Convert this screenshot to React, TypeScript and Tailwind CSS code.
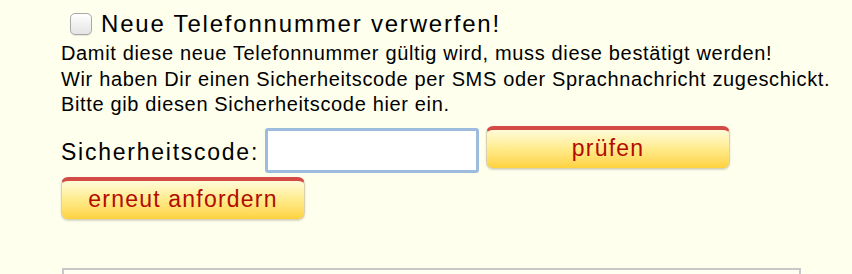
export default function App() {
  const btn =
    "h-[43px] rounded-[7px] border border-[#d9d2b0] border-t-[4px] border-t-[#d44a45] bg-gradient-to-b from-[#fffbd8] via-[#ffeb8a] to-[#ffd23c] text-[#b30a00] text-[23px] tracking-[1.2px] leading-none shadow-[0_1px_2px_rgba(0,0,0,0.15)] flex items-center justify-center";
  return (
    <div className="w-[852px] h-[274px] overflow-hidden bg-[#ffffee] font-['Liberation_Sans',Arial,sans-serif] text-black">
      <div className="pl-[61px] pt-[10px]">
        <div className="flex items-center h-[28px]">
          <span className="ml-[9px] w-[22px] h-[22px] rounded-[5px] border border-[#a9a9a9] bg-gradient-to-b from-white to-[#e4e4e4] shadow-[0_1px_1px_rgba(0,0,0,0.1)]" />
          <span className="ml-[9px] text-[24px] tracking-[1.8px] leading-none">Neue Telefonnummer verwerfen!</span>
        </div>
        <div className="mt-[3px] text-[20px] tracking-[0.65px] leading-[25.5px]">
          <p>Damit diese neue Telefonnummer gültig wird, muss diese bestätigt werden!</p>
          <p>Wir haben Dir einen Sicherheitscode per SMS oder Sprachnachricht zugeschickt.</p>
          <p>Bitte gib diesen Sicherheitscode hier ein.</p>
        </div>
        <div className="mt-[8px] flex items-start">
          <span className="mt-[12px] text-[23px] tracking-[1.75px] leading-[28px]">Sicherheitscode:</span>
          <div className="ml-[6px] mt-[2px] w-[214px] h-[45px] rounded-[3px] border-[3px] border-[#9dbbdc] bg-white" />
          <button className={btn + " ml-[7px] w-[244px]"}>prüfen</button>
        </div>
        <div className="mt-[4px]">
          <button className={btn + " w-[244px]"}>erneut anfordern</button>
        </div>
        <div className="mt-[48px] w-[739px] ml-[1px] h-[20px] border-2 border-[#c8c8c8] bg-[#fffff4]" />
      </div>
    </div>
  );
}
